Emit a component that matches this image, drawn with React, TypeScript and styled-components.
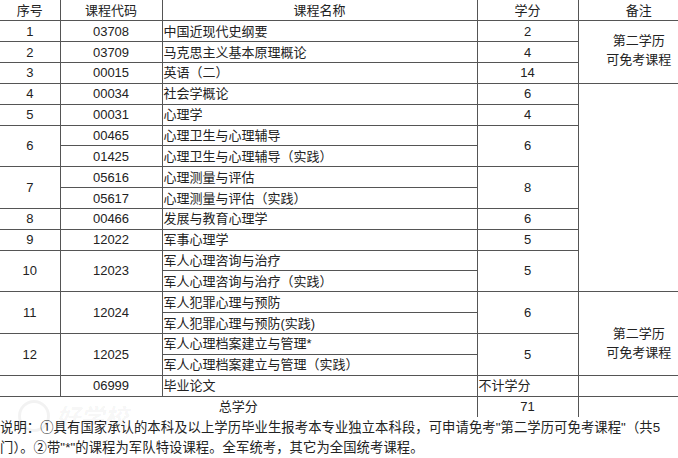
import React from 'react';
import styled, { createGlobalStyle } from 'styled-components';

const GlobalStyle = createGlobalStyle`
  html, body {
    margin: 0;
    padding: 0;
    overflow: hidden;
    background: #ffffff;
  }
  body {
    font-family: "Liberation Sans", "Noto Sans CJK SC", sans-serif;
    color: #222;
  }
`;

const Page = styled.div`
  position: relative;
  width: 678px;
  height: 458px;
  overflow: hidden;
`;

const Table = styled.table`
  width: 699px;
  table-layout: fixed;
  border-collapse: collapse;
  border-style: hidden;
  font-size: 13px;
`;

const Row = styled.tr`
  height: 20.85px;
`;

const Cell = styled.td<{ $align?: 'left' | 'center' }>`
  border: 1px solid #555;
  padding: 0 1px;
  text-align: ${(p) => p.$align ?? 'center'};
  vertical-align: middle;
  line-height: 19px;
  white-space: nowrap;
  overflow: hidden;
`;

const HeadCell = styled(Cell).attrs({ as: 'th' })`
  font-weight: normal;
`;

const Notes = styled.div`
  font-size: 13.3px;
  line-height: 20px;
  padding-top: 1px;
  letter-spacing: 0.1px;
`;

const Watermark = styled.div`
  position: absolute;
  left: 18px;
  top: 398px;
  display: flex;
  align-items: center;
  gap: 6px;
  font-size: 24px;
  font-weight: bold;
  font-style: italic;
  color: rgba(0, 0, 0, 0.05);
  pointer-events: none;
`;

const Mark = styled.span`
  width: 26px;
  height: 26px;
  border-radius: 50%;
  border: 3px solid rgba(0, 0, 0, 0.05);
`;

const Name = ({ children }: { children: React.ReactNode }) => (
  <Cell $align="left">{children}</Cell>
);

export default function App() {
  return (
    <Page>
      <GlobalStyle />
      <Table>
        <colgroup>
          <col style={{ width: 60 }} />
          <col style={{ width: 102 }} />
          <col style={{ width: 315 }} />
          <col style={{ width: 101 }} />
          <col style={{ width: 121 }} />
        </colgroup>
        <thead>
          <Row>
            <HeadCell>序号</HeadCell>
            <HeadCell>课程代码</HeadCell>
            <HeadCell>课程名称</HeadCell>
            <HeadCell>学分</HeadCell>
            <HeadCell>备注</HeadCell>
          </Row>
        </thead>
        <tbody>
          <Row>
            <Cell>1</Cell>
            <Cell>03708</Cell>
            <Name>中国近现代史纲要</Name>
            <Cell>2</Cell>
            <Cell rowSpan={3} style={{ paddingBottom: 5 }}>
              第二学历
              <br />
              可免考课程
            </Cell>
          </Row>
          <Row>
            <Cell>2</Cell>
            <Cell>03709</Cell>
            <Name>马克思主义基本原理概论</Name>
            <Cell>4</Cell>
          </Row>
          <Row>
            <Cell>3</Cell>
            <Cell>00015</Cell>
            <Name>英语（二）</Name>
            <Cell>14</Cell>
          </Row>
          <Row>
            <Cell>4</Cell>
            <Cell>00034</Cell>
            <Name>社会学概论</Name>
            <Cell>6</Cell>
            <Cell rowSpan={10} />
          </Row>
          <Row>
            <Cell>5</Cell>
            <Cell>00031</Cell>
            <Name>心理学</Name>
            <Cell>4</Cell>
          </Row>
          <Row>
            <Cell rowSpan={2}>6</Cell>
            <Cell>00465</Cell>
            <Name>心理卫生与心理辅导</Name>
            <Cell rowSpan={2}>6</Cell>
          </Row>
          <Row>
            <Cell>01425</Cell>
            <Name>心理卫生与心理辅导（实践）</Name>
          </Row>
          <Row>
            <Cell rowSpan={2}>7</Cell>
            <Cell>05616</Cell>
            <Name>心理测量与评估</Name>
            <Cell rowSpan={2}>8</Cell>
          </Row>
          <Row>
            <Cell>05617</Cell>
            <Name>心理测量与评估（实践）</Name>
          </Row>
          <Row>
            <Cell>8</Cell>
            <Cell>00466</Cell>
            <Name>发展与教育心理学</Name>
            <Cell>6</Cell>
          </Row>
          <Row>
            <Cell>9</Cell>
            <Cell>12022</Cell>
            <Name>军事心理学</Name>
            <Cell>5</Cell>
          </Row>
          <Row>
            <Cell rowSpan={2}>10</Cell>
            <Cell rowSpan={2}>12023</Cell>
            <Name>军人心理咨询与治疗</Name>
            <Cell rowSpan={2}>5</Cell>
          </Row>
          <Row>
            <Name>军人心理咨询与治疗（实践）</Name>
          </Row>
          <Row>
            <Cell rowSpan={2}>11</Cell>
            <Cell rowSpan={2}>12024</Cell>
            <Name>军人犯罪心理与预防</Name>
            <Cell rowSpan={2}>6</Cell>
            <Cell rowSpan={4}>
              <br />
              第二学历
              <br />
              可免考课程
            </Cell>
          </Row>
          <Row>
            <Name>军人犯罪心理与预防(实践)</Name>
          </Row>
          <Row>
            <Cell rowSpan={2}>12</Cell>
            <Cell rowSpan={2}>12025</Cell>
            <Name>军人心理档案建立与管理*</Name>
            <Cell rowSpan={2}>5</Cell>
          </Row>
          <Row>
            <Name>军人心理档案建立与管理（实践）</Name>
          </Row>
          <Row>
            <Cell />
            <Cell>06999</Cell>
            <Name>毕业论文</Name>
            <Cell $align="left">不计学分</Cell>
            <Cell />
          </Row>
          <Row>
            <Cell colSpan={3}>总学分</Cell>
            <Cell>71</Cell>
            <Cell />
          </Row>
        </tbody>
      </Table>
      <Notes>
        说明：①具有国家承认的本科及以上学历毕业生报考本专业独立本科段，可申请免考"第二学历可免考课程"（共5
        <br />
        门）。②带"*"的课程为军队特设课程。全军统考，其它为全国统考课程。
      </Notes>
      <Watermark>
        <Mark />
        好学校
      </Watermark>
    </Page>
  );
}
